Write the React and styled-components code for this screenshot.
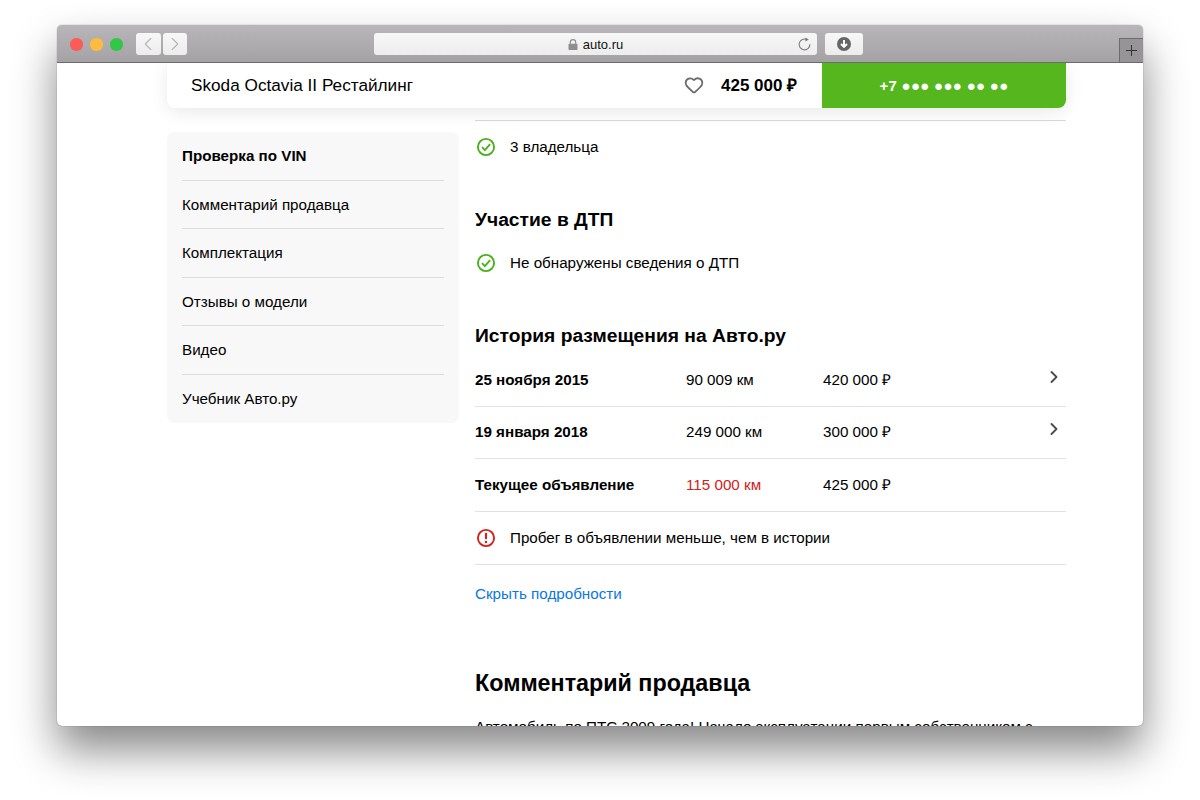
import styled, { createGlobalStyle } from 'styled-components';
import { Heart, ChevronLeft, ChevronRight } from 'lucide-react';

const GlobalStyle = createGlobalStyle`
  html, body {
    margin: 0;
    padding: 0;
    background: #fff;
    overflow: hidden;
  }
  body {
    font-family: "Liberation Sans", Arial, sans-serif;
    color: #000;
  }
`;

const sideItems = ['Комментарий продавца', 'Комплектация', 'Отзывы о модели', 'Видео', 'Учебник Авто.ру'];

const historyRows = [
  { date: '25 ноября 2015', km: '90 009 км', price: '420 000 ₽', arrow: true },
  { date: '19 января 2018', km: '249 000 км', price: '300 000 ₽', arrow: true },
  { date: 'Текущее объявление', km: '115 000 км', price: '425 000 ₽', warn: true },
];

const CheckIcon = () => (
  <StatusSvg viewBox="0 0 20 20">
    <circle cx="10" cy="10" r="8.1" fill="none" stroke="#4cb01c" strokeWidth="1.9" />
    <path d="M6 10.2l2.9 2.9 5.2-5.9" fill="none" stroke="#4cb01c" strokeWidth="1.9" />
  </StatusSvg>
);

const WarnIcon = () => (
  <StatusSvg viewBox="0 0 20 20">
    <circle cx="10" cy="10" r="8.1" fill="none" stroke="#d6201a" strokeWidth="1.9" />
    <path d="M10 4.9v6.3" fill="none" stroke="#d6201a" strokeWidth="2.1" />
    <circle cx="10" cy="14" r="1.25" fill="#d6201a" />
  </StatusSvg>
);

export default function App() {
  return (
    <>
      <GlobalStyle />
      <Page>
        <Window>
          <TitleBar>
            <Lights>
              <Light color="#fc5b57" />
              <Light color="#fdbc40" />
              <Light color="#33c748" />
            </Lights>
            <NavGroup>
              <NavButton><ChevronLeft size={22} strokeWidth={1.2} /></NavButton>
              <NavButton><ChevronRight size={22} strokeWidth={1.2} /></NavButton>
            </NavGroup>
            <AddressBar>
              <Address>
                <svg width="10" height="11" viewBox="0 0 10 11">
                  <path d="M2.3 5V3.3a2.7 2.7 0 0 1 5.4 0V5" fill="none" stroke="#8f8f8f" strokeWidth="1.2" />
                  <rect x="0.5" y="4.8" width="9" height="6.2" rx="0.8" fill="#8f8f8f" />
                </svg>
                <span>auto.ru</span>
              </Address>
              <Reload viewBox="0 0 14 14">
                <path d="M9.9 2.6a5.4 5.4 0 1 0 3 4.6" fill="none" stroke="#7b7b7b" strokeWidth="1.1" />
                <path d="M8.4 0.4l3.4 2.2-3.4 1.9z" fill="#7b7b7b" />
              </Reload>
            </AddressBar>
            <DownloadButton>
              <svg width="14" height="14" viewBox="0 0 14 14">
                <circle cx="7" cy="7" r="7" fill="#666" />
                <path d="M7 3v6M4 7l3 3 3-3" fill="none" stroke="#fff" strokeWidth="1.9" />
              </svg>
            </DownloadButton>
            <NewTab>
              <svg width="11" height="11" viewBox="0 0 11 11">
                <path d="M5.5 0v11M0 5.5h11" stroke="#333" strokeWidth="1" />
              </svg>
            </NewTab>
          </TitleBar>

          <Content>
            <StickyBar>
              <CarName>Skoda Octavia II Рестайлинг</CarName>
              <Favorite><Heart size={20} strokeWidth={2.1} color="#6b6b6b" /></Favorite>
              <BarPrice>425 000 ₽</BarPrice>
              <PhoneButton>+7 ●●● ●●● ●● ●●</PhoneButton>
            </StickyBar>

            <Columns>
              <Sidebar>
                <SideItem $active>Проверка по VIN</SideItem>
                {sideItems.map((item) => (
                  <SideItem key={item}>{item}</SideItem>
                ))}
              </Sidebar>

              <Main>
                <Divider />
                <StatusRow>
                  <CheckIcon />
                  <span>3 владельца</span>
                </StatusRow>

                <SectionTitle>Участие в ДТП</SectionTitle>
                <StatusRow $spaced>
                  <CheckIcon />
                  <span>Не обнаружены сведения о ДТП</span>
                </StatusRow>

                <SectionTitle>История размещения на Авто.ру</SectionTitle>
                <HistoryList>
                  {historyRows.map((row) => (
                    <HistoryRow key={row.date}>
                      <DateCell>{row.date}</DateCell>
                      <KmCell $warn={row.warn}>{row.km}</KmCell>
                      <PriceCell>{row.price}</PriceCell>
                      {row.arrow && (
                        <ArrowCell><ChevronRight size={20} strokeWidth={2.2} color="#4a4a4a" /></ArrowCell>
                      )}
                    </HistoryRow>
                  ))}
                  <WarnRow>
                    <WarnIcon />
                    <span>Пробег в объявлении меньше, чем в истории</span>
                  </WarnRow>
                </HistoryList>

                <MoreLink>Скрыть подробности</MoreLink>

                <BigTitle>Комментарий продавца</BigTitle>
                <Description>
                  Автомобиль по ПТС 2009 года! Начало эксплуатации первым собственником с
                </Description>
              </Main>
            </Columns>
          </Content>
        </Window>
      </Page>
    </>
  );
}

const Page = styled.div`
  box-sizing: border-box;
  width: 1200px;
  height: 800px;
  padding: 25px 57px 0;
`;

const Window = styled.div`
  width: 1086px;
  height: 701px;
  border-radius: 5px;
  background: #fff;
  display: flex;
  flex-direction: column;
  overflow: hidden;
  box-shadow: 0 0 1px rgba(0, 0, 0, 0.6), 0 24px 44px rgba(0, 0, 0, 0.47);
`;

const TitleBar = styled.div`
  box-sizing: border-box;
  flex: none;
  height: 38px;
  padding-left: 13px;
  display: flex;
  align-items: flex-start;
  background: linear-gradient(#b8b6b8, #a4a2a4);
  border-bottom: 1px solid #6c6c6c;
`;

const Lights = styled.div`
  display: flex;
  gap: 7.5px;
  margin-top: 13px;
`;

const Light = styled.span`
  display: block;
  width: 12.5px;
  height: 12.5px;
  border-radius: 50%;
  background: ${(p) => p.color};
`;

const NavGroup = styled.div`
  display: flex;
  gap: 2px;
  margin: 8px 0 0 13.5px;
`;

const NavButton = styled.div`
  width: 24.5px;
  height: 22px;
  border-radius: 3px;
  background: linear-gradient(#f7f7f7, #ececec);
  color: #b4b4b4;
  display: flex;
  align-items: center;
  justify-content: center;
`;

const AddressBar = styled.div`
  position: relative;
  box-sizing: border-box;
  width: 443px;
  height: 22px;
  margin: 8px 0 0 187px;
  border-radius: 3px;
  background: linear-gradient(#f7f7f7, #ececec);
  display: flex;
  align-items: center;
  justify-content: center;
`;

const Address = styled.div`
  display: flex;
  align-items: center;
  gap: 5px;
  font-size: 13px;
  color: #111;
`;

const Reload = styled.svg`
  position: absolute;
  right: 6px;
  top: 4px;
  width: 14px;
  height: 14px;
`;

const DownloadButton = styled.div`
  width: 38px;
  height: 22px;
  margin: 8px 0 0 8px;
  border-radius: 3px;
  background: linear-gradient(#f7f7f7, #ececec);
  display: flex;
  align-items: center;
  justify-content: center;
`;

const NewTab = styled.div`
  box-sizing: border-box;
  width: 24px;
  height: 24px;
  margin: 13px 0 0 auto;
  background: #969496;
  border: 1px solid #6c6c6c;
  border-right: none;
  border-bottom: none;
  display: flex;
  align-items: center;
  justify-content: center;
`;

const Content = styled.div`
  flex: 1;
  min-height: 0;
  padding: 0 77px 0 110px;
  overflow: hidden;
`;

const StickyBar = styled.div`
  position: relative;
  z-index: 1;
  height: 45px;
  display: flex;
  align-items: center;
  padding-left: 24px;
  border-radius: 0 0 8px 8px;
  background: #fff;
  box-shadow: 0 4px 18px rgba(0, 0, 0, 0.09);
`;

const CarName = styled.div`
  flex: 1;
  font-size: 17.2px;
`;

const Favorite = styled.div`
  display: flex;
  margin: -1px 17px 0 0;
`;

const BarPrice = styled.div`
  width: 101px;
  font-size: 17px;
  line-height: 20px;
  height: 20px;
  font-weight: 700;
`;

const PhoneButton = styled.div`
  align-self: stretch;
  width: 244px;
  border-radius: 0 0 8px 0;
  background: #56b61e;
  color: #fff;
  font-size: 15px;
  font-weight: 700;
  letter-spacing: 0.3px;
  display: flex;
  align-items: center;
  justify-content: center;
`;

const Columns = styled.div`
  display: flex;
  align-items: flex-start;
  gap: 16px;
`;

const Sidebar = styled.nav`
  flex: none;
  box-sizing: border-box;
  width: 292px;
  margin-top: 24px;
  padding: 0 15px;
  border-radius: 8px;
  background: #f8f8f8;
`;

const SideItem = styled.div`
  box-sizing: border-box;
  height: 48.5px;
  display: flex;
  align-items: center;
  font-size: 15.2px;
  font-weight: ${(p) => (p.$active ? 700 : 400)};
  border-bottom: 1px solid #dcdcdc;

  &:last-child {
    border-bottom: none;
  }
`;

const Main = styled.main`
  flex: 1;
  min-width: 0;
  margin-top: 12px;
`;

const Divider = styled.div`
  height: 1px;
  background: #d9d9d9;
`;

const StatusSvg = styled.svg`
  flex: none;
  width: 20px;
  height: 20px;
`;

const StatusRow = styled.div`
  display: flex;
  align-items: center;
  gap: 14px;
  height: 52px;
  margin-top: ${(p) => (p.$spaced ? '5px' : '0')};
  font-size: 15.2px;
  line-height: 20px;
  padding-left: 1px;
`;

const SectionTitle = styled.h3`
  margin: 35px 0 0;
  font-size: 19.25px;
  line-height: 24px;
  font-weight: 700;
`;

const HistoryList = styled.div`
  margin-top: 6px;
`;

const HistoryRow = styled.div`
  box-sizing: border-box;
  height: 52.67px;
  display: flex;
  align-items: center;
  font-size: 15.2px;
  line-height: 20px;
  border-bottom: 1px solid #e2e2e2;
`;

const DateCell = styled.div`
  width: 211px;
  font-weight: 700;
`;

const KmCell = styled.div`
  width: 137px;
  color: ${(p) => (p.$warn ? '#d6201a' : '#000')};
`;

const PriceCell = styled.div`
  flex: 1;
`;

const ArrowCell = styled.div`
  display: flex;
  margin: -6px 2px 0 0;
`;

const WarnRow = styled(HistoryRow)`
  gap: 14px;
  padding-left: 1px;
`;

const MoreLink = styled.div`
  margin-top: 19px;
  font-size: 15.2px;
  line-height: 20px;
  color: #0a78e2;
`;

const BigTitle = styled.h2`
  margin: 64px 0 0;
  font-size: 23.3px;
  line-height: 30px;
  font-weight: 700;
`;

const Description = styled.p`
  margin: 17px 0 0;
  font-size: 15.2px;
  line-height: 24px;
  white-space: nowrap;
`;
